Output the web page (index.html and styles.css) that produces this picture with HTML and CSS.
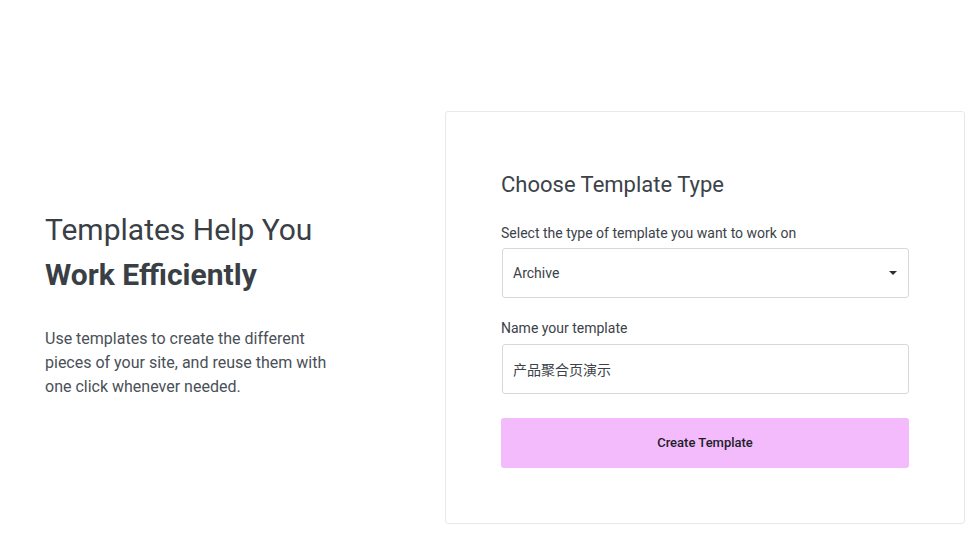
FILE: index.html
```html
<!DOCTYPE html>
<html>
<head>
<meta charset="utf-8">
<link rel="stylesheet" href="styles.css">
</head>
<body>
<div class="page">
  <div class="intro">
    <h1 class="intro-title">Templates Help You<br><strong>Work Efficiently</strong></h1>
    <p class="intro-text">Use templates to create the different pieces of your site, and reuse them with one click whenever needed.</p>
  </div>
  <div class="card">
    <h2 class="card-title">Choose Template Type</h2>
    <label class="field-label">Select the type of template you want to work on</label>
    <div class="select">
      <span>Archive</span>
      <span class="caret"></span>
    </div>
    <label class="field-label second">Name your template</label>
    <div class="input">产品聚合页演示</div>
    <button class="btn">Create Template</button>
  </div>
</div>
</body>
</html>
```
FILE: styles.css
```css
* { box-sizing: border-box; }
html, body { margin: 0; padding: 0; background: #fff; }
body { font-family: Roboto, "Noto Sans CJK SC", sans-serif; color: #3c4249; }
.page {
  display: flex;
  padding: 111px 0 0 45px;
}
.intro {
  width: 400px;
  padding-top: 96px;
}
.intro-title {
  margin: 0;
  font-size: 30px;
  line-height: 45px;
  font-weight: 400;
  color: #3a3f46;
}
.intro-title strong { font-weight: 700; }
.intro-text {
  margin: 30px 0 0;
  width: 300px;
  font-size: 16px;
  line-height: 24px;
  color: #4a5058;
}
.card {
  width: 520px;
  height: 413px;
  border: 1px solid #e6e8ea;
  border-radius: 3px;
  padding: 60px 55px 0 55px;
  display: flex;
  flex-direction: column;
}
.card-title {
  margin: 0;
  font-size: 22px;
  line-height: 26px;
  font-weight: 400;
  color: #3c4249;
}
.field-label {
  display: block;
  font-size: 14px;
  line-height: 20px;
  color: #3c4249;
  margin-top: 25px;
}
.field-label.second { margin-top: 20px; }
.select, .input {
  margin-top: 5px;
  margin-left: 1px;
  height: 50px;
  border: 1px solid #d5d8dc;
  border-radius: 3px;
  padding: 0 11px 0 10px;
  display: flex;
  align-items: center;
  justify-content: space-between;
  font-size: 14px;
  color: #3c4249;
}
.select { padding-bottom: 1px; }
.input { margin-top: 6px; }
.caret {
  width: 0;
  height: 0;
  border-left: 4.5px solid transparent;
  border-right: 4.5px solid transparent;
  border-top: 4.5px solid #2c2f33;
  margin-top: 1px;
}
.btn {
  margin-top: 24px;
  height: 50px;
  border: none;
  border-radius: 3px;
  background: #f3bbfc;
  font-family: Roboto, sans-serif;
  font-size: 13px;
  font-weight: 500;
  color: #1e1e2a;
  padding-bottom: 2px;
}
```
